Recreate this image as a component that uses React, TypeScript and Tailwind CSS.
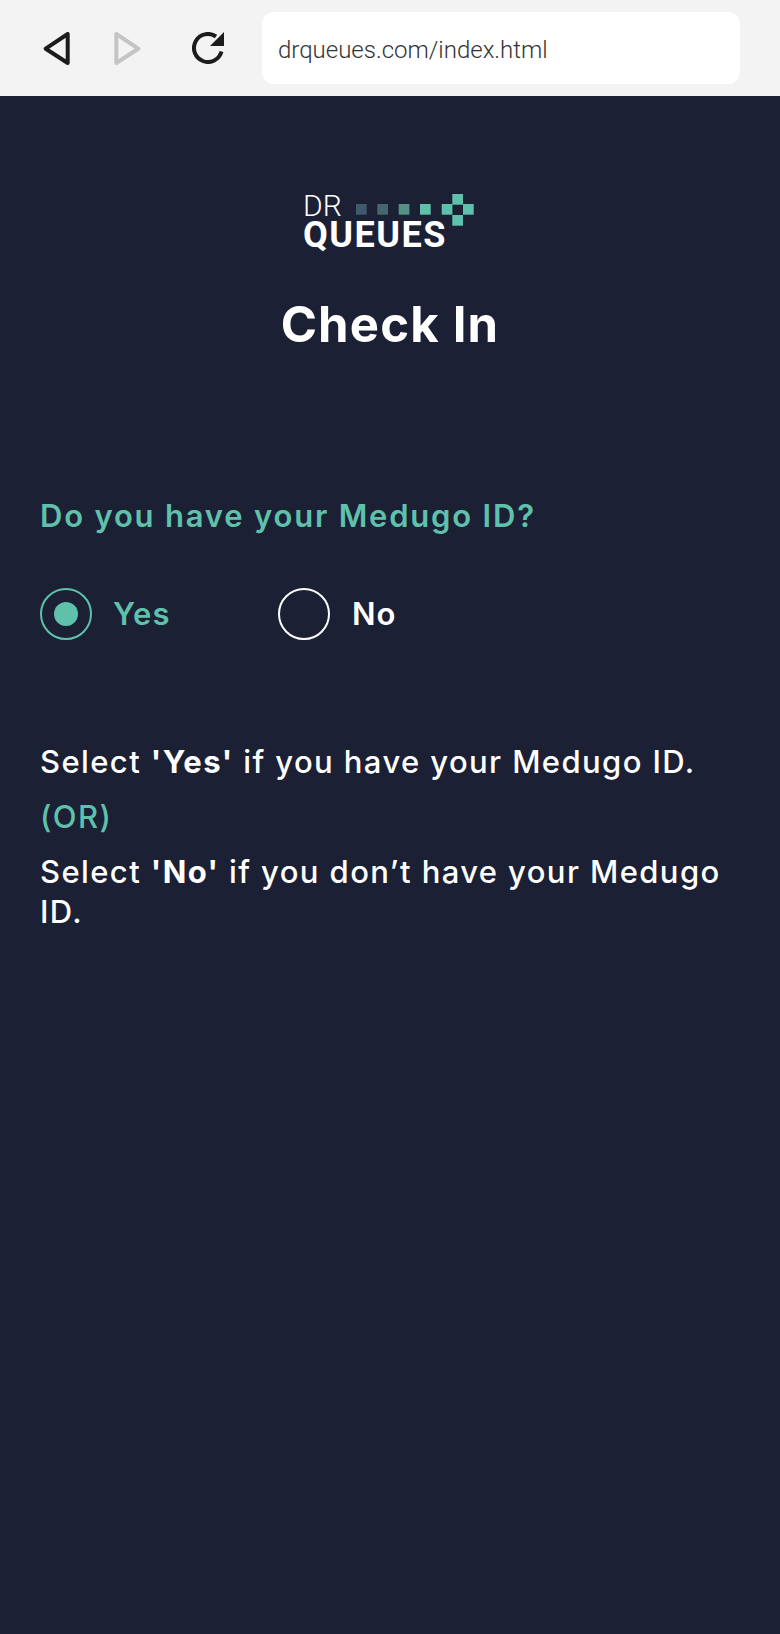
import React from 'react';

const BrowserBar = () => (
  <div className="flex h-[96px] items-center bg-[#f3f3f3] pl-[43px] pr-[40px]">
    <svg width="27" height="33" viewBox="0 0 27 33" fill="none" className="shrink-0">
      <path d="M2.7 16.7 L24.7 2 V31 Z" stroke="#1c1c1c" strokeWidth="4" strokeLinejoin="round" />
    </svg>
    <svg width="27" height="33" viewBox="0 0 27 33" fill="none" className="ml-[44px] shrink-0">
      <path d="M24.3 16.7 L2.3 2 V31 Z" stroke="#c4c4c4" strokeWidth="4" strokeLinejoin="round" />
    </svg>
    <svg width="32" height="32" viewBox="0 0 32 32" fill="none" className="ml-[51px] shrink-0">
      <path d="M24 4.5 A14 14 0 1 0 29.5 19.6" stroke="#1c1c1c" strokeWidth="4" />
      <path d="M32 0 V14 H18 Z" fill="#1c1c1c" />
    </svg>
    <div className="ml-[38px] flex h-[72px] flex-1 items-center rounded-[12px] bg-white pl-[16px] pt-[4px] font-['Roboto',sans-serif] text-[24px] font-light text-[#333333]">
      drqueues.com/index.html
    </div>
  </div>
);

const Logo = () => {
  const squares = [
    ['#3f5a6b', 356],
    ['#47676f', 377.3],
    ['#559186', 398.7],
    ['#5fc0ab', 420],
  ] as const;
  return (
    <div className="flex justify-center pr-[3px]">
      <div className="relative h-[60px] w-[171px] pt-[2px] font-['Roboto',sans-serif] text-white">
        <div className="text-[30px] font-light leading-[24px]">DR</div>
        <div className="mt-[4px] text-[36px] font-bold leading-[26px] tracking-[1.5px]">QUEUES</div>
        <svg width="171" height="60" viewBox="303 192 171 60" className="absolute left-0 top-0">
          {squares.map(([color, x]) => (
            <rect key={x} x={x} y={204} width={10.7} height={10.7} fill={color} />
          ))}
          <rect x="441.7" y="204" width="10.7" height="10.7" fill="#5fc0ab" />
          <rect x="452.3" y="194" width="10.7" height="10.7" fill="#5fc0ab" />
          <rect x="463" y="204" width="10.7" height="10.7" fill="#5fc0ab" />
          <rect x="452.3" y="215" width="10.7" height="10.7" fill="#5fc0ab" />
        </svg>
      </div>
    </div>
  );
};

const App = () => {
  return (
    <div className="flex min-h-[1634px] flex-col bg-[#1b2034] font-['Inter',sans-serif] text-white">
      <BrowserBar />
      <div className="px-[40px] pt-[96px]">
        <Logo />
        <h1 className="mt-[43px] text-center text-[49px] font-bold leading-[60px] tracking-[1.2px]">Check In</h1>

        <p className="mt-[141px] text-[31px] font-semibold leading-[40px] tracking-[1.8px] text-[#5fc0ab]">Do you have your Medugo ID?</p>

        {/* Radios */}
        <div className="mt-[52px] flex items-center">
          <div className="flex w-[238px] items-center gap-[21px]">
            <span className="flex h-[52px] w-[52px] items-center justify-center rounded-full border-[2px] border-[#5fc0ab]">
              <span className="h-[24px] w-[24px] rounded-full bg-[#5fc0ab]" />
            </span>
            <span className="text-[31px] font-semibold tracking-[1px] text-[#5fc0ab]">Yes</span>
          </div>
          <div className="flex items-center gap-[22px]">
            <span className="h-[52px] w-[52px] rounded-full border-[2px] border-white" />
            <span className="text-[31px] font-semibold tracking-[1px]">No</span>
          </div>
        </div>

        <div className="mt-[102px] text-[31px] font-medium leading-[40px] tracking-[1.4px]">
          <p>Select <b className="font-bold">'Yes'</b> if you have your Medugo ID.</p>
          <p className="mt-[15px] text-[#5fc0ab]">(OR)</p>
          <p className="mt-[15px]">Select <b className="font-bold">'No'</b> if you don’t have your Medugo ID.</p>
        </div>
      </div>
    </div>
  );
};

export default App;
